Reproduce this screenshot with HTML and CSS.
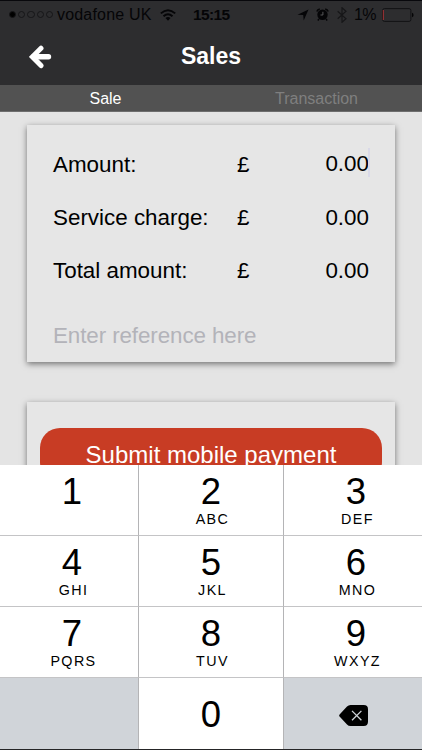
FILE: index.html
```html
<!DOCTYPE html>
<html lang="en">

<head>
    <meta charset="UTF-8" />
    <meta name="viewport" content="width=device-width, initial-scale=1.0" />
    <title>Sales</title>
    <link rel="stylesheet" href="styles.css">
</head>

<body>
    <div class="app">
        <header class="header">
            <div class="status-bar">
                <div class="signal">
                    <i class="dot full"></i><i class="dot"></i><i class="dot"></i><i class="dot"></i><i class="dot"></i>
                </div>
                <span class="carrier">vodafone UK</span>
                <svg class="wifi" width="16" height="12" viewBox="0 0 16 12" fill="none" stroke="currentColor" stroke-width="1.9">
                    <path d="M.8 4.4Q8-2.1 15.2 4.4M3.5 7.3Q8 3.1 12.5 7.3" />
                    <path d="M5.5 9.1Q8 7 10.5 9.1L8 11.7z" fill="currentColor" stroke="none" />
                </svg>
                <span class="clock">15:15</span>
                <div class="status-right">
                    <svg class="location" width="12" height="12" viewBox="0 0 12 12">
                        <path d="M11.5.5 6.7 11.5 6.2 6.1.5 5.7z" fill="currentColor" />
                    </svg>
                    <svg class="alarm" width="13" height="13" viewBox="0 0 13 13" fill="none">
                        <circle cx="6.5" cy="6.8" r="5.2" fill="currentColor" />
                        <path d="M.8 3.6A4 4 0 0 1 3.8.9M12.2 3.6A4 4 0 0 0 9.2.9M3 11 1.8 12.4M10 11l1.2 1.4" stroke="currentColor" stroke-width="1.5" />
                        <path d="M6.9 3.8V7H4.5" stroke="#58585a" stroke-width="1" />
                    </svg>
                    <svg class="bluetooth" width="10" height="16" viewBox="0 0 10 16" fill="none" stroke="currentColor" stroke-width="1.2">
                        <path d="M.7 4.2 9 11.7 5 15.3V.7L9 4.3.7 11.8" />
                    </svg>
                    <span class="percent">1%</span>
                    <svg class="battery" width="32" height="14" viewBox="0 0 32 14">
                        <rect x=".6" y=".6" width="28.3" height="12.8" rx="1.8" fill="none" stroke="#121214" />
                        <path d="M1.3 2v10" stroke="#a93236" stroke-width="1" />
                        <path d="M30 4.7q1.6.3 1.6 2.3T30 9.3z" fill="#050507" />
                    </svg>
                </div>
            </div>
            <div class="nav-bar">
                <svg class="back" width="23" height="24" viewBox="0 0 23 24" fill="none" stroke="#fff" stroke-linecap="round">
                    <path d="M12 3.2 3.4 11.8l8.6 8.8" stroke-width="5" />
                    <path d="M4.5 11.8h15" stroke-width="5.4" />
                </svg>
                <h1>Sales</h1>
            </div>
        </header>

        <nav class="tabs">
            <a class="tab active">Sale</a>
            <a class="tab">Transaction</a>
        </nav>

        <main class="content">
            <section class="card form-card">
                <div class="row">
                    <span class="label">Amount:</span>
                    <span class="currency">£</span>
                    <span class="value focused">0.00</span>
                </div>
                <div class="row">
                    <span class="label">Service charge:</span>
                    <span class="currency">£</span>
                    <span class="value">0.00</span>
                </div>
                <div class="row">
                    <span class="label">Total amount:</span>
                    <span class="currency">£</span>
                    <span class="value">0.00</span>
                </div>
                <div class="reference">Enter reference here</div>
            </section>
            <section class="card submit-card">
                <div class="submit">Submit mobile payment</div>
            </section>
        </main>

        <div class="keypad">
            <div class="key"><b>1</b></div>
            <div class="key"><b>2</b><small>ABC</small></div>
            <div class="key"><b>3</b><small>DEF</small></div>
            <div class="key"><b>4</b><small>GHI</small></div>
            <div class="key"><b>5</b><small>JKL</small></div>
            <div class="key"><b>6</b><small>MNO</small></div>
            <div class="key"><b>7</b><small>PQRS</small></div>
            <div class="key"><b>8</b><small>TUV</small></div>
            <div class="key"><b>9</b><small>WXYZ</small></div>
            <div class="key grey"></div>
            <div class="key zero"><b>0</b></div>
            <div class="key grey delete">
                <svg width="29" height="21" viewBox="0 0 29 21">
                    <path d="M.8 9.2 8 1.6Q9.5 0 11.5 0h13.2Q29 0 29 4.2v12.6q0 4.2-4.3 4.2H11.5q-2 0-3.5-1.6L.8 11.8q-1.3-1.3 0-2.6z" fill="#000" />
                    <path d="m13 5.9 9.4 9.4m0-9.4L13 15.3" stroke="#d0d4d9" stroke-width="1.3" />
                </svg>
            </div>
        </div>
    </div>
</body>

</html>
```
FILE: styles.css
```css
:root {
    --header-bg: #2d2d2f;
    --tabs-bg: #525252;
    --page-bg: #e4e4e4;
    --card-bg: #e6e6e6;
    --red: #c83c24;
    --key-grey: #d0d4d9;
    --line: #c4c4c6;
}

* {
    box-sizing: border-box;
}

body {
    margin: 0;
    font-family: "Liberation Sans", Arial, sans-serif;
    background: var(--page-bg);
    color: #000;
}

.app {
    width: 422px;
    height: 750px;
    display: flex;
    flex-direction: column;
    overflow: hidden;
    border-bottom: 1px solid #252527;
}

.header {
    height: 85px;
    flex: none;
    background: var(--header-bg);
    border-top: 1px solid #08080c;
}

.status-bar {
    height: 27px;
    display: flex;
    align-items: center;
    padding: 0 8px 0 9px;
    color: #050507;
    font-size: 16px;
    line-height: 27px;
    white-space: nowrap;
}

.signal {
    display: flex;
    gap: 2px;
}

.dot {
    width: 7.2px;
    height: 7.2px;
    border: 1px solid #161618;
    border-radius: 50%;
}

.dot.full {
    background: #000;
}

.carrier {
    margin-left: 4px;
    width: 95px;
    letter-spacing: 0.2px;
}

.wifi {
    margin-left: 8px;
}

.clock {
    margin-left: 17px;
    font-weight: bold;
    font-size: 15.5px;
    letter-spacing: -0.6px;
}

.status-right {
    display: flex;
    align-items: center;
    margin-left: auto;
}

.alarm {
    margin-left: 7px;
}

.bluetooth {
    margin-left: 8px;
    color: #161618;
}

.percent {
    margin-left: 7px;
    letter-spacing: -0.6px;
}

.battery {
    margin-left: 6px;
}

.nav-bar {
    height: 57px;
    display: grid;
    grid-template-columns: 100px 1fr 100px;
    align-items: center;
}

.back {
    margin-left: 29px;
}

.nav-bar h1 {
    margin: 0;
    text-align: center;
    color: #fff;
    font-size: 23px;
    font-weight: bold;
}

.tabs {
    height: 27px;
    flex: none;
    display: grid;
    grid-template-columns: 1fr 1fr;
    background: var(--tabs-bg);
    border-bottom: 1px solid #6e6e6e;
    color: #7f7f7f;
    font-size: 16px;
    line-height: 27px;
    text-align: center;
}

.tab.active {
    color: #fff;
}

.content {
    height: 353px;
    flex: none;
    padding: 13px 27px 0;
    overflow: hidden;
}

.card {
    background: var(--card-bg);
    box-shadow: 0 2px 6px rgba(0, 0, 0, 0.5);
}

.form-card {
    height: 237px;
    padding: 13px 26px 0;
    font-size: 22.4px;
}

.row {
    height: 52.8px;
    display: grid;
    grid-template-columns: 184px 30px 1fr;
    line-height: 53px;
}

.value {
    text-align: right;
}

.value.focused {
    position: relative;
    top: -1px;
}

/* caret */
.value.focused::after {
    content: "";
    position: absolute;
    right: -1px;
    top: 11px;
    width: 2px;
    height: 29px;
    background: #d9d9e8;
}

.reference {
    margin-top: 13px;
    line-height: 53px;
    letter-spacing: -0.1px;
    color: #b3b3b9;
}

.submit-card {
    height: 130px;
    margin-top: 40px;
    padding: 26px 13px;
}

.submit {
    height: 54px;
    border-radius: 20px;
    background: var(--red);
    color: #fff;
    font-size: 24px;
    line-height: 53px;
    text-align: center;
}

.keypad {
    flex: 1;
    display: grid;
    grid-template-columns: 139px 145px 1fr;
    grid-template-rows: repeat(4, 1fr);
    background: #fff;
}

.key {
    display: flex;
    flex-direction: column;
    align-items: center;
    padding-top: 7px;
    border-right: 1px solid #b4b4b6;
    border-bottom: 1px solid var(--line);
}

.key:nth-child(3n) {
    border-right: none;
    padding-left: 6px;
}

.key:nth-child(3n + 1) {
    padding-left: 6px;
}

.key:nth-child(n + 10) {
    border-bottom: none;
}

.key b {
    font-size: 36.5px;
    font-weight: normal;
    line-height: 40px;
}

.key small {
    margin-top: -2px;
    padding-left: 3px;
    font-size: 14.3px;
    line-height: 18px;
    letter-spacing: 1.4px;
}

.key.grey {
    background: var(--key-grey);
}

.key.zero {
    padding-top: 17px;
}

.key.delete {
    justify-content: center;
    padding: 4px 0 0;
}
```
